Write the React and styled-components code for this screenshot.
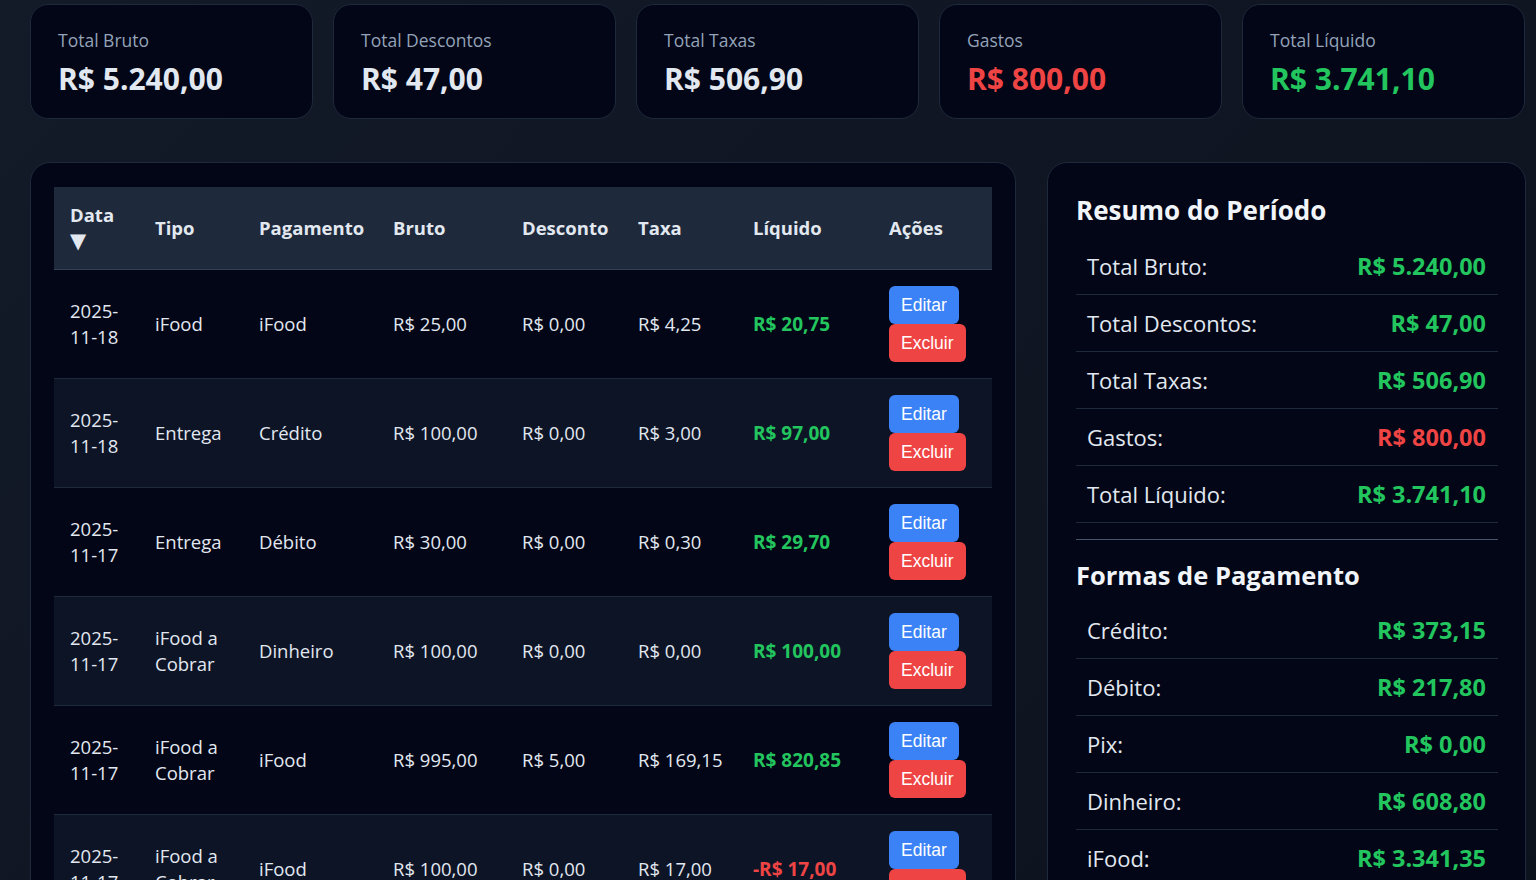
import styled, { createGlobalStyle } from 'styled-components';

const GlobalStyle = createGlobalStyle`
  html, body {
    margin: 0;
    padding: 0;
    background: linear-gradient(135deg, #131a28 0%, #0f1521 60%, #0d131d 100%);
    min-height: 100%;
  }
  body {
    font-family: 'Open Sans', 'Noto Sans', sans-serif;
    color: #e2e8f0;
    overflow: hidden;
  }
`;

const Page = styled.div`
  padding: 4px 10px 40px 30px;
`;

const CardsRow = styled.div`
  display: grid;
  grid-template-columns: repeat(5, 283px);
  gap: 20px;
  margin-bottom: 43px;
`;

const StatCard = styled.div`
  background: #020617;
  border: 1px solid #1e293b;
  border-radius: 18px;
  padding: 23px 27px 21px;
  height: 115px;
  box-sizing: border-box;
`;

const StatLabel = styled.div`
  font-size: 17.5px;
  line-height: 24px;
  color: #94a3b8;
  margin-bottom: 7px;
`;

const StatValue = styled.div`
  font-size: 30px;
  line-height: 40px;
  font-weight: 700;
  color: ${(p) => p.$color || '#e2e8f0'};
`;

const Main = styled.div`
  display: grid;
  grid-template-columns: 986px 479px;
  gap: 31px;
  align-items: start;
`;

const Panel = styled.div`
  background: #020617;
  border: 1px solid #1e293b;
  border-radius: 20px;
  padding: ${(p) => p.$pad || '24px 23px'};
`;

const Table = styled.table`
  width: 938px;
  border-collapse: collapse;
  table-layout: fixed;
`;

const Th = styled.th`
  background: #1e293b;
  text-align: left;
  font-weight: 700;
  font-size: 18.5px;
  line-height: 26px;
  padding: 15px 16px;
  color: #e2e8f0;
  border-bottom: 1px solid #334155;
  vertical-align: middle;
`;

const SortArrow = styled.span`
  display: block;
  font-size: 21px;
  line-height: 26px;
  font-family: 'DejaVu Sans', sans-serif;
`;

const Row = styled.tr`
  background: ${(p) => (p.$alt ? '#0d1426' : '#020617')};
  border-bottom: 1px solid #1e293b;
`;

const Td = styled.td`
  padding: 16px;
  font-size: ${(p) => (p.$bold ? '19px' : '18.5px')};
  line-height: 26px;
  color: ${(p) => p.$color || '#e2e8f0'};
  font-weight: ${(p) => (p.$bold ? 700 : 400)};
  vertical-align: middle;
  white-space: ${(p) => (p.$nowrap ? 'nowrap' : 'normal')};
`;

const Actions = styled.div`
  display: flex;
  flex-direction: column;
  align-items: flex-start;
`;

const Btn = styled.button`
  font-family: 'Liberation Sans', Arial, sans-serif;
  font-size: 17.5px;
  line-height: 22px;
  height: 38px;
  padding: 8px 12px;
  border: none;
  border-radius: 6px;
  color: #fff;
  background: ${(p) => (p.$danger ? '#ef4444' : '#3b82f6')};
  cursor: pointer;
`;

const SideTitle = styled.h2`
  margin: ${(p) => (p.$second ? '17px 0 9px' : '5px 0 10px')};
  font-size: ${(p) => (p.$second ? '25.5px' : '26px')};
  line-height: 36px;
  font-weight: 700;
  color: #f1f5f9;
`;

const SummaryRow = styled.div`
  display: flex;
  justify-content: space-between;
  align-items: center;
  height: 56px;
  padding: 0 12px 0 11px;
  border-bottom: 1px solid #1e293b;
  font-size: 22px;
`;

const SummaryLabel = styled.span`
  color: #e2e8f0;
`;

const SummaryValue = styled.span`
  font-weight: 700;
  font-size: 23.5px;
  color: ${(p) => (p.$neg ? '#ef4444' : '#22c55e')};
`;

const Divider = styled.hr`
  border: none;
  border-top: 1px solid #475569;
  margin: 16px 0 0;
`;

const cards = [
  { label: 'Total Bruto', value: 'R$ 5.240,00' },
  { label: 'Total Descontos', value: 'R$ 47,00' },
  { label: 'Total Taxas', value: 'R$ 506,90' },
  { label: 'Gastos', value: 'R$ 800,00', color: '#ef4444' },
  { label: 'Total Líquido', value: 'R$ 3.741,10', color: '#22c55e' },
];

const rows = [
  ['2025-11-18', 'iFood', 'iFood', 'R$ 25,00', 'R$ 0,00', 'R$ 4,25', 'R$ 20,75'],
  ['2025-11-18', 'Entrega', 'Crédito', 'R$ 100,00', 'R$ 0,00', 'R$ 3,00', 'R$ 97,00'],
  ['2025-11-17', 'Entrega', 'Débito', 'R$ 30,00', 'R$ 0,00', 'R$ 0,30', 'R$ 29,70'],
  ['2025-11-17', 'iFood a Cobrar', 'Dinheiro', 'R$ 100,00', 'R$ 0,00', 'R$ 0,00', 'R$ 100,00'],
  ['2025-11-17', 'iFood a Cobrar', 'iFood', 'R$ 995,00', 'R$ 5,00', 'R$ 169,15', 'R$ 820,85'],
  ['2025-11-17', 'iFood a Cobrar', 'iFood', 'R$ 100,00', 'R$ 0,00', 'R$ 17,00', '-R$ 17,00'],
];

const resumo = [
  ['Total Bruto:', 'R$ 5.240,00'],
  ['Total Descontos:', 'R$ 47,00'],
  ['Total Taxas:', 'R$ 506,90'],
  ['Gastos:', 'R$ 800,00', true],
  ['Total Líquido:', 'R$ 3.741,10'],
];

const formas = [
  ['Crédito:', 'R$ 373,15'],
  ['Débito:', 'R$ 217,80'],
  ['Pix:', 'R$ 0,00'],
  ['Dinheiro:', 'R$ 608,80'],
  ['iFood:', 'R$ 3.341,35'],
  ['iFood a Cobrar:', 'R$ 0,00'],
];

const widths = [85, 104, 134, 129, 116, 115, 136, 119];

export default function App() {
  return (
    <>
      <GlobalStyle />
      <Page>
        <CardsRow>
          {cards.map((c) => (
            <StatCard key={c.label}>
              <StatLabel>{c.label}</StatLabel>
              <StatValue $color={c.color}>{c.value}</StatValue>
            </StatCard>
          ))}
        </CardsRow>
        <Main>
          <Panel>
            <Table>
              <colgroup>
                {widths.map((w, i) => (
                  <col key={i} style={{ width: w }} />
                ))}
              </colgroup>
              <thead>
                <tr>
                  <Th>
                    Data
                    <SortArrow>▼</SortArrow>
                  </Th>
                  <Th>Tipo</Th>
                  <Th>Pagamento</Th>
                  <Th>Bruto</Th>
                  <Th>Desconto</Th>
                  <Th>Taxa</Th>
                  <Th>Líquido</Th>
                  <Th>Ações</Th>
                </tr>
              </thead>
              <tbody>
                {rows.map((r, i) => {
                  const neg = r[6].startsWith('-');
                  return (
                    <Row key={i} $alt={i % 2 === 1}>
                      <Td>{r[0]}</Td>
                      <Td>{r[1]}</Td>
                      <Td>{r[2]}</Td>
                      <Td $nowrap>{r[3]}</Td>
                      <Td $nowrap>{r[4]}</Td>
                      <Td $nowrap>{r[5]}</Td>
                      <Td $nowrap $bold $color={neg ? '#ef4444' : '#22c55e'}>{r[6]}</Td>
                      <Td>
                        <Actions>
                          <Btn>Editar</Btn>
                          <Btn $danger>Excluir</Btn>
                        </Actions>
                      </Td>
                    </Row>
                  );
                })}
              </tbody>
            </Table>
          </Panel>
          <Panel $pad="24px 27px 24px 28px">
            <SideTitle>Resumo do Período</SideTitle>
            {resumo.map(([l, v, neg]) => (
              <SummaryRow key={l}>
                <SummaryLabel>{l}</SummaryLabel>
                <SummaryValue $neg={neg}>{v}</SummaryValue>
              </SummaryRow>
            ))}
            <Divider />
            <SideTitle $second>Formas de Pagamento</SideTitle>
            {formas.map(([l, v]) => (
              <SummaryRow key={l}>
                <SummaryLabel>{l}</SummaryLabel>
                <SummaryValue>{v}</SummaryValue>
              </SummaryRow>
            ))}
          </Panel>
        </Main>
      </Page>
    </>
  );
}
